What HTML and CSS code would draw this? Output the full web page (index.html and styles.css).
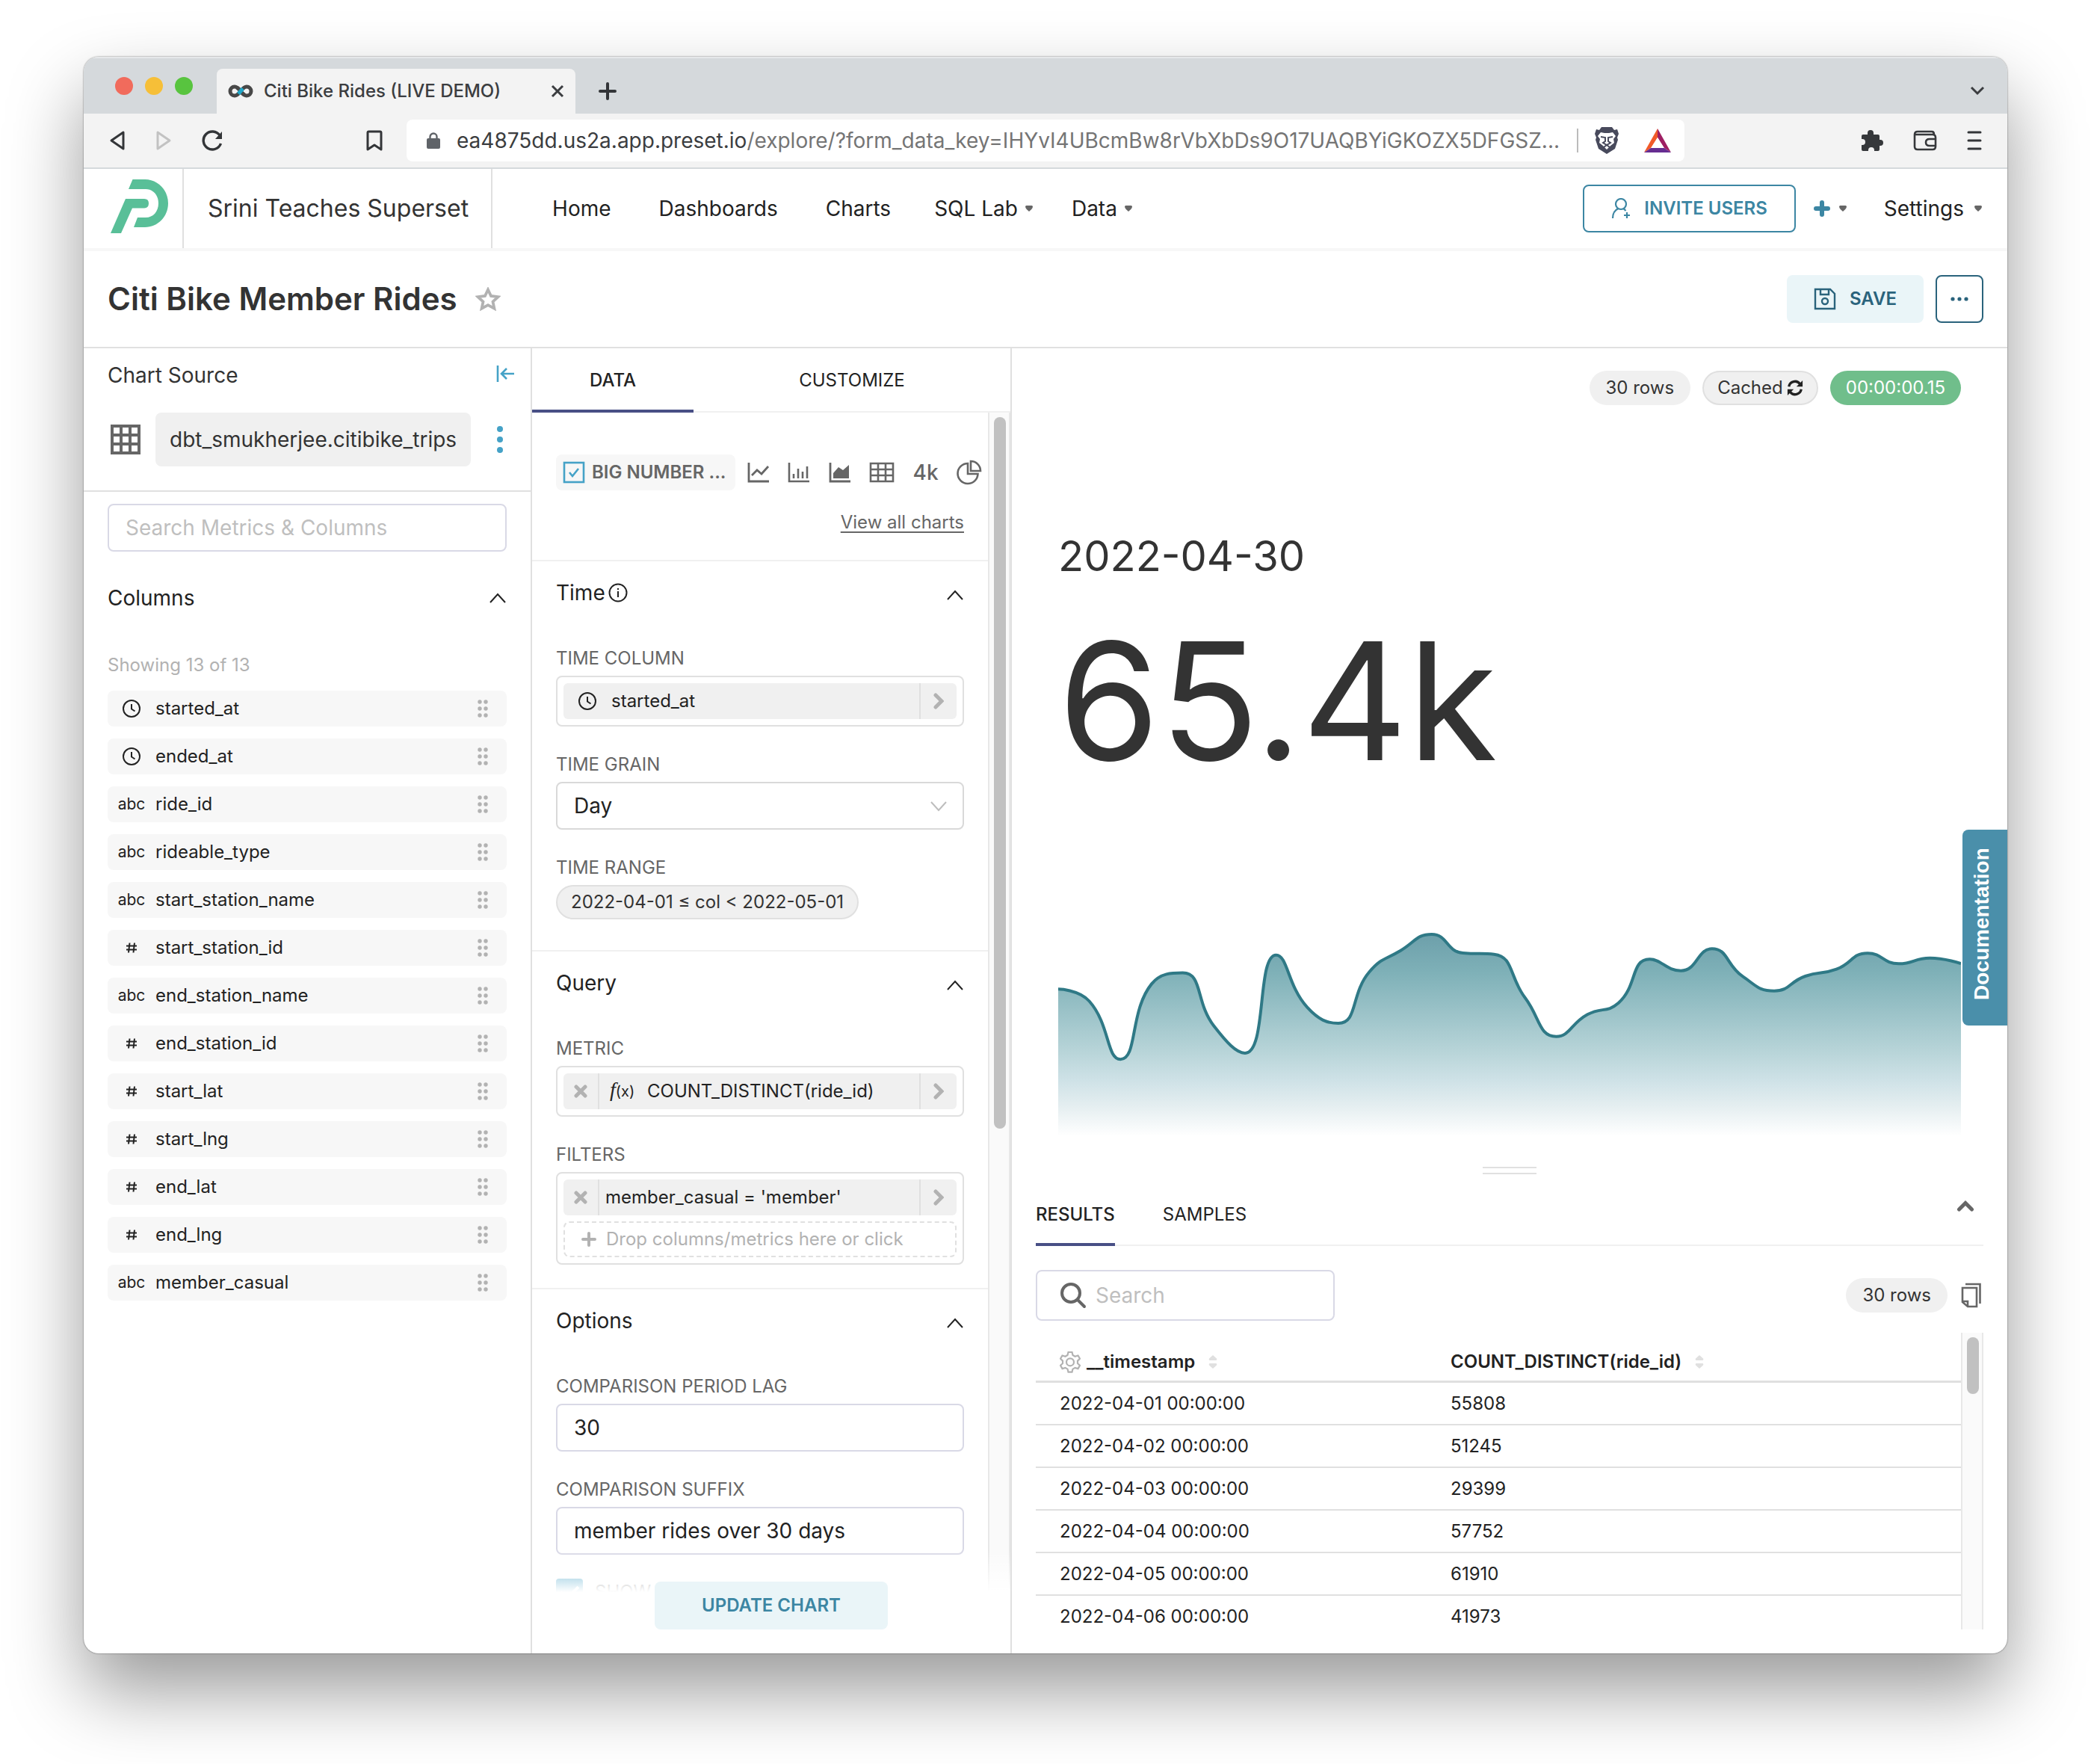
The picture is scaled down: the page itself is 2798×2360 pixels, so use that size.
FILE: index.html
```html
<!DOCTYPE html>
<html lang="en">
<head>
<meta charset="utf-8">
<meta name="viewport" content="width=device-width, initial-scale=1">
<title>Citi Bike Rides (LIVE DEMO)</title>
<link rel="stylesheet" href="styles.css">
</head>
<body>
<svg class="sprite" aria-hidden="true">
  <symbol id="i-clock" viewBox="0 0 26 26"><circle cx="13" cy="13" r="11"/><path d="M13 7v6.500l4.500 3"/></symbol>
  <symbol id="i-hash" viewBox="0 0 26 26"><path d="M10.500 6.500l-1.500 13M17 6.500l-1.500 13M6 10.500h14M6 15.500h14"/></symbol>
  <symbol id="i-grip" viewBox="0 0 14 24"><circle cx="3" cy="3" r="2.700"/><circle cx="11" cy="3" r="2.700"/><circle cx="3" cy="12" r="2.700"/><circle cx="11" cy="12" r="2.700"/><circle cx="3" cy="21" r="2.700"/><circle cx="11" cy="21" r="2.700"/></symbol>
  <symbol id="i-up" viewBox="0 0 22 14"><path d="M1 13L11 2l10 11"/></symbol>
  <symbol id="i-caret" viewBox="0 0 10 8"><path d="M1.500 0h7Q10 0 10 1.500C10 4 7 6 5 8 3 6 0 4 0 1.500Q0 0 1.500 0z"/></symbol>
  <symbol id="i-next" viewBox="0 0 14 22"><path d="M3 3l8 8-8 8"/></symbol>
  <symbol id="i-x" viewBox="0 0 18 18"><path d="M3 3l12 12M15 3L3 15"/></symbol>
  <symbol id="i-sort" viewBox="0 0 12 18"><path d="M6 0l5 4.500q1 2-1 2.500H2Q0 6.500 1 4.500zM6 18l5-4.500q1-2-1-2.500H2q-2 .500-1 2.500z"/></symbol>
</svg>

<div class="window">
  <header class="tabstrip">
    <div class="lights"><span class="light red"></span><span class="light amber"></span><span class="light green"></span></div>
    <div class="tab">
      <svg class="favicon" width="34" height="18" viewBox="0 0 34 18" fill="none" stroke-width="5"><path stroke="#484848" d="M17 9C14 5 12 3 9 3a6 6 0 0 0 0 12c3 0 5-2 8-6"/><path stroke="#484848" d="M17 9c3 4 5 6 8 6a6 6 0 0 0 0-12c-3 0-5 2-8 6"/><path stroke="#20a7c9" d="M14 12.500L20 5.500"/><path stroke="#484848" d="M12 4l3 2.500M19 11.500l3 2.500"/></svg>
      <span class="tab-title">Citi Bike Rides (LIVE DEMO)</span>
      <button class="icon-btn" aria-label="Close tab"><svg width="18" height="18" viewBox="0 0 18 18" fill="none" stroke="#3b3d40" stroke-width="3"><path d="M2 2l14 14M16 2L2 16"/></svg></button>
    </div>
    <button class="icon-btn new-tab" aria-label="New tab"><svg width="26" height="26" viewBox="0 0 26 26" fill="none" stroke="#333538" stroke-width="4" stroke-linecap="round"><path d="M13 3v20M3 13h20"/></svg></button>
    <button class="icon-btn tab-list" aria-label="List tabs"><svg width="20" height="14" viewBox="0 0 20 14" fill="none" stroke="#3b3d40" stroke-width="3"><path d="M2 2l8 8 8-8"/></svg></button>
  </header>

  <div class="toolbar">
    <div class="tools-left">
      <button class="icon-btn" aria-label="Back"><svg width="22" height="28" viewBox="0 0 22 28" fill="none" stroke="#333538" stroke-width="3" stroke-linejoin="round"><path d="M19 3v22L3 14z"/></svg></button>
      <button class="icon-btn" aria-label="Forward"><svg width="22" height="28" viewBox="0 0 22 28" fill="none" stroke="#c2c2c2" stroke-width="3" stroke-linejoin="round"><path d="M3 3v22l16-11z"/></svg></button>
      <button class="icon-btn" aria-label="Reload"><svg width="30" height="28" viewBox="0 0 30 28" fill="none" stroke="#333538" stroke-width="3.400"><path d="M25.500 18A12 12 0 1 1 24 7"/><path fill="#333538" stroke="none" d="M27 2v10h-9z"/></svg></button>
      <button class="icon-btn bookmark" aria-label="Bookmark"><svg width="22" height="28" viewBox="0 0 22 28" fill="none" stroke="#333538" stroke-width="3" stroke-linejoin="round"><path d="M2 3.500Q2 2 3.500 2h15Q20 2 20 3.500V26l-9-6-9 6z"/></svg></button>
    </div>
    <div class="address">
      <svg width="18" height="22" viewBox="0 0 18 22"><path fill="none" stroke="#5f6368" stroke-width="2.400" d="M4.500 10V6a4.500 4.500 0 0 1 9 0v4"/><rect y="8" width="18" height="14" rx="2" fill="#5f6368"/></svg>
      <p class="url"><span class="host">ea4875dd.us2a.app.preset.io</span>/explore/?form_data_key=IHYvI4UBcmBw8rVbXbDs9O17UAQBYiGKOZX5DFGSZ...</p>
      <span class="address-rule"></span>
      <svg class="brave" width="32" height="36" viewBox="0 0 32 36"><path fill="#484a5c" d="M9 0h14l3 4 4-1 2 6-2 5 1 3-4 12-11 7-11-7L1 17l1-3L0 9l2-6 4 1z"/><path fill="#fff" d="M8 7l5 1h6l5-1 4 5-3 4 1 5-5 4-5 5-5-5-5-4 1-5-3-4z"/><path fill="none" stroke="#484a5c" stroke-width="2" d="M8 13l6 1v5l-3 2 5 3 5-3-3-2v-5l6-1M12 27l4-3 4 3"/></svg>
      <svg class="bat" width="36" height="32" viewBox="0 0 36 32"><path fill="#f15a29" d="M18 0v12L9 26 0 32z"/><path fill="#9e1f63" d="M18 0l18 32-9-6-9-14z"/><path fill="#662d91" d="M0 32l9-6h18l9 6z"/><path fill="#fff" d="M18 12l8 13H10z"/></svg>
    </div>
    <div class="tools-right">
      <button class="icon-btn" aria-label="Extensions"><svg width="30" height="30" viewBox="0 0 30 30" fill="#36383b"><path d="M9 5a4 4 0 0 1 8 0v2h6q2 0 2 2v5h1a4 4 0 0 1 0 8h-1v5q0 2-2 2h-5v-1a4 4 0 0 0-8 0v1H3q-2 0-2-2v-6h1a4 4 0 0 0 0-8H1V9q0-2 2-2h6z"/></svg></button>
      <button class="icon-btn" aria-label="Wallet"><svg width="32" height="28" viewBox="0 0 32 28" fill="none" stroke="#36383b" stroke-width="2.600"><path d="M2 6q0-4 4-4h19q3 0 3 4M2 6v16q0 4 4 4h20q4 0 4-4V10q0-4-4-4H2M30 12h-8q-5 0-5 4.500t5 4.500h8"/></svg></button>
      <button class="icon-btn" aria-label="Menu"><svg width="20" height="26" viewBox="0 0 20 26" stroke="#333538" stroke-width="3" stroke-linecap="round"><path d="M2 2h16M2 13h16M2 24h16"/></svg></button>
    </div>
  </div>

  <div class="navbar">
    <a class="logo" href="#" aria-label="Preset"><svg width="78" height="73" viewBox="0 0 78 73" fill="#59bf98"><path d="M30.500 0H47C64 0 78 14 78 32S64 64 47 64H32l5-13h11c10 0 17-8 17-19S58 13 48 13H25z"/><path d="M21 26h25q6 0 6 6t-6 6.500H30L15 72H1z"/></svg></a>
    <span class="brand">Srini Teaches Superset</span>
    <nav class="nav">
      <a href="#">Home</a><a href="#">Dashboards</a><a href="#">Charts</a>
      <span class="menus">
        <a href="#" class="drop">SQL Lab<svg class="caret" width="10" height="8"><use href="#i-caret"/></svg></a>
        <a href="#" class="drop">Data<svg class="caret" width="10" height="8"><use href="#i-caret"/></svg></a>
      </span>
    </nav>
    <button class="btn btn-outline invite"><svg width="26" height="28" viewBox="0 0 26 28" fill="none" stroke="#3c86a3" stroke-width="2.200"><circle cx="13" cy="8" r="7"/><path d="M2 27c0-7 3-11 7.500-13M16.500 14l3 3M21 19v8M17 23h8"/></svg>INVITE USERS</button>
    <button class="icon-btn add" aria-label="Add"><svg width="22" height="22" viewBox="0 0 22 22" stroke="#3c86a3" stroke-width="6" stroke-linecap="round"><path d="M11 3v16M3 11h16"/></svg><svg class="caret" width="10" height="8"><use href="#i-caret"/></svg></button>
    <a href="#" class="drop settings">Settings<svg class="caret" width="10" height="8"><use href="#i-caret"/></svg></a>
  </div>

  <div class="title-bar">
    <h1>Citi Bike Member Rides</h1>
    <button class="icon-btn star" aria-label="Favorite"><svg width="34" height="32" viewBox="0 0 34 32" fill="none" stroke="#b2b2b2" stroke-width="3.800"><path d="M17 3.500l4 8.500 9.500 1.200-7 6.500 1.900 9L17 24.200l-8.400 4.500 1.900-9-7-6.500L13 12z"/></svg></button>
    <button class="btn btn-soft save"><svg width="30" height="30" viewBox="0 0 30 30" fill="none" stroke="#2a637c" stroke-width="2.400"><path d="M2 2h20l6 6v20H2zM9 2v7h11V2"/><circle cx="15" cy="18" r="4"/></svg>SAVE</button>
    <button class="btn more" aria-label="More actions"><svg width="24" height="6" viewBox="0 0 24 6" fill="#2a637c"><circle cx="3" cy="3" r="2.600"/><circle cx="12" cy="3" r="2.600"/><circle cx="21" cy="3" r="2.600"/></svg></button>
  </div>

  <main class="explore">
    <aside class="source">
      <div class="source-head">
        <div class="source-title"><h2>Chart Source</h2>
          <button class="icon-btn" aria-label="Collapse panel"><svg width="24" height="22" viewBox="0 0 24 22" fill="none" stroke="#45a2c7" stroke-width="2.600"><path d="M2 0v22M7 11h17M14 4l-7 7 7 7"/></svg></button></div>
        <div class="dataset">
          <svg width="42" height="42" viewBox="0 0 42 42" fill="none" stroke="#666" stroke-width="4"><rect x="3" y="3" width="36" height="36"/><path d="M15 3v36M27 3v36M3 15h36M3 27h36"/></svg>
          <span class="dataset-name">dbt_smukherjee.citibike_trips</span>
          <button class="icon-btn kebab" aria-label="Dataset options"><svg width="10" height="36" viewBox="0 0 10 36" fill="#45a2c7"><circle cx="5" cy="4" r="4"/><circle cx="5" cy="18" r="4"/><circle cx="5" cy="32" r="4"/></svg></button>
        </div>
      </div>
      <div class="source-body">
        <input class="field" type="text" placeholder="Search Metrics &amp; Columns" aria-label="Search metrics and columns">
        <div class="section-head columns-head"><h2>Columns</h2><svg class="chev" width="22" height="14"><use href="#i-up"/></svg></div>
        <p class="showing">Showing 13 of 13</p>
        <ul class="columns">
          <li><span class="kind"><svg class="line" width="26" height="26"><use href="#i-clock"/></svg></span>started_at<svg class="grip" width="14" height="24"><use href="#i-grip"/></svg></li>
          <li><span class="kind"><svg class="line" width="26" height="26"><use href="#i-clock"/></svg></span>ended_at<svg class="grip" width="14" height="24"><use href="#i-grip"/></svg></li>
          <li><span class="kind">abc</span>ride_id<svg class="grip" width="14" height="24"><use href="#i-grip"/></svg></li>
          <li><span class="kind">abc</span>rideable_type<svg class="grip" width="14" height="24"><use href="#i-grip"/></svg></li>
          <li><span class="kind">abc</span>start_station_name<svg class="grip" width="14" height="24"><use href="#i-grip"/></svg></li>
          <li><span class="kind"><svg class="line" width="26" height="26"><use href="#i-hash"/></svg></span>start_station_id<svg class="grip" width="14" height="24"><use href="#i-grip"/></svg></li>
          <li><span class="kind">abc</span>end_station_name<svg class="grip" width="14" height="24"><use href="#i-grip"/></svg></li>
          <li><span class="kind"><svg class="line" width="26" height="26"><use href="#i-hash"/></svg></span>end_station_id<svg class="grip" width="14" height="24"><use href="#i-grip"/></svg></li>
          <li><span class="kind"><svg class="line" width="26" height="26"><use href="#i-hash"/></svg></span>start_lat<svg class="grip" width="14" height="24"><use href="#i-grip"/></svg></li>
          <li><span class="kind"><svg class="line" width="26" height="26"><use href="#i-hash"/></svg></span>start_lng<svg class="grip" width="14" height="24"><use href="#i-grip"/></svg></li>
          <li><span class="kind"><svg class="line" width="26" height="26"><use href="#i-hash"/></svg></span>end_lat<svg class="grip" width="14" height="24"><use href="#i-grip"/></svg></li>
          <li><span class="kind"><svg class="line" width="26" height="26"><use href="#i-hash"/></svg></span>end_lng<svg class="grip" width="14" height="24"><use href="#i-grip"/></svg></li>
          <li><span class="kind">abc</span>member_casual<svg class="grip" width="14" height="24"><use href="#i-grip"/></svg></li>
        </ul>
      </div>
    </aside>

    <section class="controls">
      <div class="tabs control-tabs"><button class="tab-btn active">DATA</button><button class="tab-btn">CUSTOMIZE</button></div>
      <div class="scroller">
        <div class="form">
          <div class="viz">
            <div class="viz-row">
              <button class="viz-current"><svg width="30" height="30" viewBox="0 0 30 30" fill="none" stroke="#45a2c7" stroke-width="2.600"><rect x="2" y="2" width="26" height="26"/><path d="M9 15l4 5 8-10"/></svg>BIG NUMBER ...</button>
              <div class="viz-icons">
                <button class="icon-btn" aria-label="Line chart"><svg width="30" height="28" viewBox="0 0 30 28" fill="none" stroke="#666" stroke-width="2.800"><path d="M2 1v25h27M6 18l7-7 6 5 9-10"/></svg></button>
                <button class="icon-btn" aria-label="Bar chart"><svg width="30" height="28" viewBox="0 0 30 28" fill="none" stroke="#666" stroke-width="2.600"><path d="M2 1v25h27M8 22v-6M14 22V9M20 22V13M26 22V6"/></svg></button>
                <button class="icon-btn" aria-label="Area chart"><svg width="30" height="28" viewBox="0 0 30 28" fill="none" stroke="#666" stroke-width="2.800"><path d="M2 1v25h27"/><path fill="#666" stroke="none" d="M6 22v-7l7-8 6 4 8-7v18z"/></svg></button>
                <button class="icon-btn" aria-label="Table"><svg width="34" height="28" viewBox="0 0 34 28" fill="none" stroke="#666" stroke-width="2.600"><path d="M2 2h30v24H2zM12 2v24M22 2v24M2 10h30M2 18h30"/></svg></button>
                <button class="icon-btn fourk">4k</button>
                <button class="icon-btn" aria-label="Pie chart"><svg width="34" height="34" viewBox="0 0 34 34" fill="none" stroke="#666" stroke-width="2.600"><path d="M15 5A13.500 13.500 0 1 0 28.500 19H15z"/><path d="M19 2v13h13A13 13 0 0 0 19 2z"/></svg></button>
              </div>
            </div>
            <a class="view-all" href="#">View all charts</a>
          </div>

          <section class="group group-time">
            <div class="section-head"><h2>Time <svg class="line" width="26" height="26" viewBox="0 0 26 26"><circle cx="13" cy="13" r="11.500"/><path d="M13 11v8M13 7v2"/></svg></h2><svg class="chev" width="22" height="14"><use href="#i-up"/></svg></div>
            <div class="control"><span class="label">TIME COLUMN</span>
              <div class="dropbox"><div class="pill-row"><span class="pill-icon"><svg class="line" width="26" height="26"><use href="#i-clock"/></svg></span><span class="pill-text">started_at</span><button class="pill-btn end" aria-label="Edit column"><svg width="14" height="22"><use href="#i-next"/></svg></button></div></div>
            </div>
            <div class="control"><label class="label" for="grain">TIME GRAIN</label>
              <div class="select"><select class="field" id="grain"><option>Day</option></select><svg class="select-chev" width="22" height="14" viewBox="0 0 22 14" fill="none" stroke="#bdbdbd" stroke-width="2"><path d="M1 1l10 11L21 1"/></svg></div>
            </div>
            <div class="control"><span class="label">TIME RANGE</span><button class="chip bordered">2022-04-01 ≤ col &lt; 2022-05-01</button></div>
          </section>

          <section class="group">
            <div class="section-head"><h2>Query</h2><svg class="chev" width="22" height="14"><use href="#i-up"/></svg></div>
            <div class="control"><span class="label">METRIC</span>
              <div class="dropbox"><div class="pill-row"><button class="pill-btn" aria-label="Remove metric"><svg width="18" height="18"><use href="#i-x"/></svg></button><span class="pill-text"><span class="fx"><i>f</i>(x)</span>COUNT_DISTINCT(ride_id)</span><button class="pill-btn end" aria-label="Edit metric"><svg width="14" height="22"><use href="#i-next"/></svg></button></div></div>
            </div>
            <div class="control"><span class="label">FILTERS</span>
              <div class="dropbox"><div class="pill-row"><button class="pill-btn" aria-label="Remove filter"><svg width="18" height="18"><use href="#i-x"/></svg></button><span class="pill-text tight">member_casual = 'member'</span><button class="pill-btn end" aria-label="Edit filter"><svg width="14" height="22"><use href="#i-next"/></svg></button></div>
              <button class="drop-here"><svg width="22" height="22" viewBox="0 0 22 22" stroke="#b2b2b2" stroke-width="4" stroke-linecap="round"><path d="M11 3v16M3 11h16"/></svg>Drop columns/metrics here or click</button></div>
            </div>
          </section>

          <section class="group">
            <div class="section-head"><h2>Options</h2><svg class="chev" width="22" height="14"><use href="#i-up"/></svg></div>
            <div class="control"><label class="label" for="lag">COMPARISON PERIOD LAG</label><input class="field" id="lag" type="text" value="30"></div>
            <div class="control"><label class="label" for="suffix">COMPARISON SUFFIX</label><input class="field" id="suffix" type="text" value="member rides over 30 days"></div>
            <label class="check"><input type="checkbox" checked>SHOW</label>
          </section>
        </div>
        <div class="track"><span class="thumb"></span></div>
      </div>
      <div class="update-bar"><button class="btn btn-soft update">UPDATE CHART</button></div>
    </section>

    <section class="result">
      <div class="chart">
        <div class="badges"><span class="chip">30 rows</span><button class="chip bordered">Cached<svg width="22" height="22" viewBox="0 0 24 24" fill="none" stroke="#222" stroke-width="3.600"><path d="M3 10a9 9 0 0 1 16-4M21 14a9 9 0 0 1-16 4"/><path fill="#222" stroke="none" d="M23 1v9h-9zM1 23v-9h9z"/></svg></button><span class="chip timer">00:00:00.15</span></div>
        <p class="date">2022-04-30</p>
        <p class="big">65.4k</p>
        <svg class="trend" viewBox="0 0 1208 280" preserveAspectRatio="none" role="img" aria-label="Daily member rides">
          <defs><linearGradient id="fade" gradientUnits="userSpaceOnUse" x1="0" y1="8" x2="0" y2="280"><stop offset="0" stop-color="#6c9faa"/><stop offset=".2" stop-color="#7fb1b8"/><stop offset=".58" stop-color="#b7d4d8"/><stop offset=".73" stop-color="#cfe2e7"/><stop offset=".86" stop-color="#e6eff1"/><stop offset="1" stop-color="#fff"/></linearGradient></defs>
          <path id="trend-area" fill="url(#fade)"/><path id="trend-line" fill="none" stroke="#2f7986" stroke-width="4" vector-effect="non-scaling-stroke"/>
        </svg>
      </div>
      <div class="handle"></div>
      <div class="data">
        <div class="tabs data-tabs"><button class="tab-btn active">RESULTS</button><button class="tab-btn">SAMPLES</button>
          <button class="icon-btn collapse" aria-label="Collapse data"><svg width="24" height="16" viewBox="0 0 24 16" fill="none" stroke="#666" stroke-width="5" stroke-linecap="round"><path d="M3.500 13L12 4.500 20.500 13"/></svg></button></div>
        <div class="data-bar">
          <label class="search"><svg width="36" height="36" viewBox="0 0 36 36" fill="none" stroke="#666" stroke-width="4" stroke-linecap="round"><circle cx="15" cy="15" r="12"/><path d="M24 24l9 9"/></svg><input type="text" placeholder="Search" aria-label="Search"></label>
          <span class="chip">30 rows</span>
          <button class="icon-btn" aria-label="Copy"><svg width="28" height="34" viewBox="0 0 28 34" fill="none" stroke="#666" stroke-width="2.600"><path d="M2 7h19v25H9l-7-6zM2 25h7v7M6 2h19.500v26"/></svg></button>
        </div>
        <div class="table-scroll">
          <table>
            <thead><tr>
              <th><span><svg width="28" height="30" viewBox="0 0 28 30" fill="none" stroke="#b2b2b2" stroke-width="2.200"><path d="M11.500 2h5l1 4 3 1.700 4-1.200 2.500 4.300-3 2.800v3.400l3 2.800-2.500 4.300-4-1.200-3 1.700-1 4h-5l-1-4-3-1.700-4 1.200L1 19.800 4 17v-3.400L1 10.800l2.500-4.300 4 1.200 3-1.700z"/><circle cx="14" cy="15.300" r="5"/></svg>__timestamp<svg class="sort" width="12" height="18"><use href="#i-sort"/></svg></span></th>
              <th><span>COUNT_DISTINCT(ride_id)<svg class="sort" width="12" height="18"><use href="#i-sort"/></svg></span></th>
            </tr></thead>
            <tbody>
              <tr><td>2022-04-01 00:00:00</td><td>55808</td></tr>
              <tr><td>2022-04-02 00:00:00</td><td>51245</td></tr>
              <tr><td>2022-04-03 00:00:00</td><td>29399</td></tr>
              <tr><td>2022-04-04 00:00:00</td><td>57752</td></tr>
              <tr><td>2022-04-05 00:00:00</td><td>61910</td></tr>
              <tr><td>2022-04-06 00:00:00</td><td>41973</td></tr>
            </tbody>
          </table>
          <div class="track"><span class="thumb short"></span></div>
        </div>
      </div>
    </section>
    <a class="docs" href="#">Documentation</a>
  </main>
</div>
<script src="chart.js"></script>
</body>
</html>
```

FILE: styles.css
```css
* { box-sizing: border-box; }
body { margin: 0; padding: 76px 112px 148px; background: #fff; font: 24px/36px Inter, "Liberation Sans", sans-serif; color: #222; }
h1, h2, p, ul { margin: 0; padding: 0; font-weight: 400; }
ul { list-style: none; }
a { color: inherit; text-decoration: none; }
button, input, select { margin: 0; font: inherit; color: inherit; }
button { border: 0; padding: 0; background: none; cursor: pointer; }
svg { display: block; flex: none; }
.sprite { position: absolute; width: 0; height: 0; }
.icon-btn { display: flex; align-items: center; }
.line { fill: none; stroke: #222; stroke-width: 2; }
.chev { fill: none; stroke: #222; stroke-width: 2; }

.window { display: flex; flex-direction: column; height: calc(100vh - 224px); border-radius: 20px; overflow: hidden; background: #fff; box-shadow: 0 0 2px rgba(0,0,0,.6), 0 50px 100px rgba(0,0,0,.4); }

/* browser chrome */
.tabstrip { display: flex; align-items: flex-end; height: 76px; flex: none; padding: 0 30px 0 42px; background: #d5d9dc; box-shadow: inset 0 2px #e6e8ea; }
.lights { display: flex; gap: 16px; width: 136px; padding-bottom: 25px; }
.light { width: 24px; height: 24px; border-radius: 50%; }
.red { background: #f16b5c; }
.amber { background: #f6bf38; }
.green { background: #58c43f; }
.tab { display: flex; align-items: center; width: 480px; height: 60px; padding: 0 15px; border-radius: 8px 8px 0 0; background: #f3f3f3; }
.tab-title { flex: 1; padding-left: 14px; font-weight: 500; color: #3b3d40; }
.new-tab { height: 60px; margin-left: 30px; }
.tab-list { height: 60px; margin-left: auto; }
.toolbar { display: grid; grid-template-columns: 432px 1fr 432px; align-items: center; flex: none; padding: 8px 0; border-bottom: 2px solid #d5d9dc; background: #f3f3f3; }
.tools-left { display: flex; gap: 40px; padding: 0 32px 0 34px; }
.bookmark { margin-left: auto; }
.address { display: flex; align-items: center; height: 56px; padding: 0 18px 0 27px; border-radius: 8px; background: #fff; }
.url { flex: 1; min-width: 0; overflow: hidden; padding-left: 22px; font-size: 28px; white-space: nowrap; color: #757575; }
.host { color: #3b3d40; }
.address-rule { width: 2px; height: 32px; margin-right: 22px; background: #bbb; }
.bat { margin-left: 34px; }
.tools-right { display: flex; justify-content: flex-end; gap: 40px; padding-right: 34px; }

/* application header */
.navbar { display: flex; align-items: center; flex: none; height: 110px; border-bottom: 4px solid #f7f7f7; font-size: 28px; padding-right: 34px; }
.logo { align-self: stretch; display: flex; align-items: center; width: 134px; padding: 0 0 6px 35px; border-right: 2px solid #e0e0e0; }
.brand { align-self: stretch; display: flex; align-items: center; padding: 0 30px 0 32px; border-right: 2px solid #e0e0e0; font-size: 32px; color: #333; }
.nav { display: flex; gap: 64px; flex: 1; padding-left: 80px; }
.menus { display: flex; gap: 52px; margin-left: -6px; }
.drop { display: flex; align-items: center; gap: 10px; }
.settings { gap: 14px; }
.caret { fill: #666; }
.btn { display: flex; align-items: center; justify-content: center; height: 64px; border-radius: 8px; font-size: 24px; font-weight: 600; }
.btn-outline { border: 2px solid #3c86a3; color: #3c86a3; }
.invite { gap: 18px; padding: 0 36px; }
.add { gap: 12px; margin: 0 50px 0 24px; }
.title-bar { display: flex; align-items: center; flex: none; height: 130px; padding: 0 32px; border-bottom: 2px solid #e0e0e0; }
.title-bar h1 { font-size: 42px; line-height: 56px; font-weight: 600; color: #333; }
.star { margin: 0 auto 0 24px; }
.btn-soft { background: #eaf5f8; color: #3c86a3; }
.save { gap: 18px; padding: 0 36px; color: #2a637c; }
.more { width: 64px; margin-left: 16px; border: 2px solid #2a637c; }

/* explore layout */
.explore { position: relative; display: grid; grid-template-columns: 600px 642px 1fr; grid-template-rows: minmax(0, 1fr); flex: 1; min-height: 0; }
.source { border-right: 2px solid #e0e0e0; }
h2 { font-size: 28px; line-height: 44px; }
.source-head { padding: 14px 22px 32px 32px; border-bottom: 2px solid #e0e0e0; color: #333; }
.source-title { display: flex; justify-content: space-between; height: 72px; }
.source-title .icon-btn { height: 40px; }
.dataset { display: flex; align-items: center; height: 72px; padding-left: 3px; }
.dataset-name { height: 72px; margin-left: 19px; padding: 0 19px; border-radius: 8px; background: #f0f0f0; font-size: 28px; line-height: 72px; }
.kebab { margin: 0 14px 0 auto; }
.source-body { padding: 16px 32px 0; }
.field { display: block; width: 100%; height: 64px; padding: 0 22px; border: 2px solid #d9d9e6; border-radius: 8px; background: #fff; font-size: 28px; outline: 0; }
::placeholder { color: #bfbfbf; opacity: 1; }
.section-head { display: flex; align-items: center; justify-content: space-between; height: 44px; padding-right: 1px; }
.section-head h2 { display: flex; align-items: center; gap: 4px; }
.columns-head { margin-top: 40px; }
.showing { margin: 50px 0 16px; color: #b2b2b2; }
.columns { display: flex; flex-direction: column; gap: 16px; }
.columns li { display: flex; align-items: center; height: 48px; padding-right: 25px; border-radius: 8px; background: #f7f7f7; }
.kind { display: flex; justify-content: center; width: 64px; font-size: 21px; }
.grip { margin-left: auto; fill: #b2b2b2; }

/* control panel */
.controls { display: flex; flex-direction: column; min-height: 0; border-right: 2px solid #e0e0e0; }
.tabs { display: flex; flex: none; box-shadow: inset 0 -2px #f0f0f0; }
.tab-btn { height: 86px; padding-top: 4px; border-bottom: 4px solid transparent; }
.tab-btn.active { border-color: #484f85; font-weight: 500; }
.control-tabs { display: grid; grid-template-columns: 216px 1fr; }
.scroller { position: relative; display: flex; flex: 1; min-height: 0; overflow: hidden; }
.scroller::after { content: ""; position: absolute; inset: auto 0 0; height: 56px; background: linear-gradient(rgba(255,255,255,0), #fff); }
.form { flex: 1; min-width: 0; }
.form .chev { margin-top: 6px; }
.track { flex: none; width: 30px; padding: 6px 6px 0; border: solid #e8e8e8; border-width: 0 2px; background: #fafafa; }
.thumb { display: block; width: 16px; height: 952px; margin: 0 auto; border-radius: 8px; background: #c1c1c1; }
.thumb.short { height: 76px; }
.viz { display: flex; flex-direction: column; padding: 56px 8px 32px 32px; }
.viz-row { display: flex; align-items: center; gap: 16px; height: 48px; }
.viz-icons { display: flex; align-items: center; justify-content: space-between; flex: 1; }
.viz-current { display: flex; align-items: center; gap: 9px; height: 48px; width: 240px; padding-left: 9px; border-radius: 8px; background: #f7f7f7; font-weight: 600; color: #666; white-space: nowrap; }
.fourk { font-size: 28px; font-weight: 500; color: #666; }
.view-all { align-self: flex-end; margin: 25px 24px 0 0; color: #666; text-decoration: underline; text-underline-offset: 4px; }
.group { display: flex; flex-direction: column; padding: 20px 32px 31px; border-top: 2px solid #f0f0f0; }
.group-time { padding-bottom: 41px; }
.section-head + .control { margin-top: 50px; }
.control + .control { margin-top: 35px; }
.label { display: block; margin-bottom: 7px; line-height: 32px; color: #666; }
.dropbox { display: flex; flex-direction: column; gap: 8px; padding: 8px; border: 2px solid #e0e0e0; border-radius: 8px; }
.pill-row { display: flex; align-items: center; height: 48px; border-radius: 6px; background: #f0f0f0; }
.pill-icon { display: flex; justify-content: center; width: 64px; }
.pill-text { display: flex; align-items: center; flex: 1; }
.pill-btn { display: flex; align-items: center; justify-content: center; width: 48px; height: 48px; border-right: 2px solid #e0e0e0; fill: none; stroke: #b2b2b2; stroke-width: 5; stroke-linecap: round; }
.pill-btn.end { width: 50px; border-right: 0; border-left: 2px solid #e0e0e0; }
.pill-btn + .pill-text { padding-left: 14px; }
.pill-btn + .pill-text.tight { padding-left: 8px; }
.fx { width: 50px; font-size: 20px; }
.fx i { font: italic 28px/28px "Liberation Serif", serif; }
.drop-here { display: flex; align-items: center; gap: 12px; height: 48px; padding-left: 21px; border: 2px dashed #e0e0e0; border-radius: 8px; color: #b2b2b2; }
.select { position: relative; }
.select .field { appearance: none; border-color: #d9d9d9; }
.select-chev { position: absolute; right: 23px; top: 26px; pointer-events: none; }
.chip { display: flex; align-items: center; gap: 5px; width: max-content; height: 46px; padding: 0 22px; border-radius: 23px; background: #f0f0f0; color: #333; }
.chip.bordered { padding: 0 18px; border: 2px solid #e0e0e0; }
.chip.timer { padding: 0 21px; background: #70be8b; color: #fff; }
.check { display: flex; align-items: center; gap: 16px; margin-top: 32px; color: #666; }
.check input { appearance: none; display: flex; justify-content: center; width: 36px; height: 36px; border-radius: 4px; background: #45a2c7; }
.check input::after { content: ""; width: 10px; height: 20px; margin-top: 4px; border: solid #fff; border-width: 0 4px 4px 0; transform: rotate(45deg); }
.update-bar { z-index: 1; display: flex; flex: none; justify-content: center; margin-top: -14px; padding-bottom: 32px; }
.update { width: 312px; }

/* chart and data */
.result { min-width: 0; min-height: 0; display: flex; flex-direction: column; }
.chart { flex: none; padding: 30px 62px 0; }
.badges { display: flex; justify-content: flex-end; gap: 16px; }
.date { margin-top: 170px; font-size: 56px; line-height: 64px; color: #333; }
.big { margin-top: 52px; font-size: 219px; line-height: 220px; color: #333; }
.trend { width: 100%; height: 280px; margin-top: 192px; }
.handle { flex: none; width: 72px; height: 10px; margin: 41px auto 0; border: solid #e0e0e0; border-width: 2px 0; }
.data { display: flex; flex-direction: column; flex: 1; min-height: 0; padding: 12px 32px 32px; }
.data-tabs { gap: 64px; }
.data-tabs .tab-btn { height: 84px; }
.collapse { height: 60px; margin: 0 12px 0 auto; }
.data-bar { display: flex; align-items: center; flex: none; gap: 18px; margin: 32px 0 16px; padding-right: 2px; }
.search { display: flex; align-items: center; gap: 12px; width: 400px; height: 68px; margin-right: auto; padding: 0 30px; border: 2px solid #d9d9e6; border-radius: 8px; font-size: 28px; }
.search input { width: 100%; border: 0; padding: 0; outline: 0; background: none; }
.table-scroll { display: flex; flex: 1; min-height: 0; overflow: hidden; }
table { flex: 1; align-self: flex-start; border-collapse: separate; border-spacing: 0; table-layout: fixed; }
th, td { padding: 0 0 0 32px; text-align: left; }
th:first-child { width: 523px; }
th { height: 67px; padding-top: 14px; border-bottom: 3px solid #e0e0e0; font-weight: 600; }
th span { display: flex; align-items: center; gap: 8px; }
.sort { margin-left: 10px; fill: #e0e0e0; }
td { height: 57px; border-bottom: 2px solid #e0e0e0; }
tbody tr:last-child td { border-bottom-color: transparent; }
.docs { position: absolute; right: 0; top: 644px; width: 60px; height: 262px; padding: 34px 0 0; border-radius: 0 8px 8px 0; background: #4a8faa; color: #fff; font: bold 28px/52px "Liberation Sans", sans-serif; writing-mode: vertical-rl; transform: rotate(180deg); }
```

FILE: chart.js
```js
// Daily rides for April 2022, drawn as a smoothed area chart.
const rides = [55808, 51245, 29399, 57752, 61910, 41973, 31760, 68621, 48952, 42966,
  62355, 70308, 76405, 69380, 68902, 52520, 37992, 46254, 50637, 67048,
  62720, 70982, 60473, 55133, 60670, 63283, 69296, 65362, 67498, 65400];
const WIDTH = 1208, HEIGHT = 280, TOP = 10, PER_PX = 281, SMOOTH = 0.5;
const max = Math.max(...rides);
const pts = rides.map((v, i) => [i * WIDTH / (rides.length - 1), TOP + (max - v) / PER_PX]);

const clamp = (v, a, b) => Math.max(Math.min(a, b), Math.min(Math.max(a, b), v));
const dist = (a, b) => Math.hypot(a[0] - b[0], a[1] - b[1]);

// Control points follow the neighbours' direction but stay inside each segment.
let line = `M${pts[0]}`;
let out = pts[0];
for (let i = 1; i < pts.length; i++) {
  const prev = pts[i - 1], cur = pts[i], next = pts[i + 1];
  let into = cur, nextOut = cur;
  if (next) {
    const a = dist(prev, cur), b = dist(cur, next), r = b / (a + b);
    nextOut = cur.map((c, k) => clamp(c + (next[k] - prev[k]) * SMOOTH * r, c, next[k]));
    into = cur.map((c, k) => clamp(c - (nextOut[k] - c) * a / b, prev[k], c));
    nextOut = cur.map((c, k) => c + (c - into[k]) * b / a);
  }
  line += `C${out} ${into} ${cur}`;
  out = nextOut;
}
document.getElementById('trend-line').setAttribute('d', line);
document.getElementById('trend-area').setAttribute('d', `${line}V${HEIGHT}H0Z`);
```
